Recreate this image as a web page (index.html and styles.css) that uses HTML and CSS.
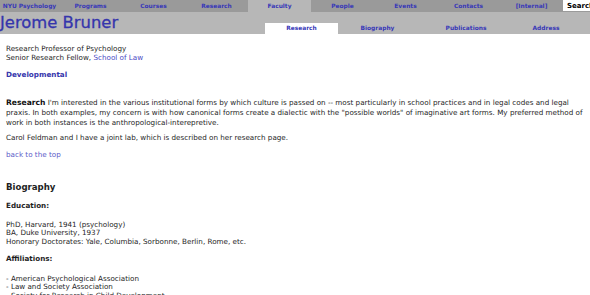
FILE: index.html
```html
<!DOCTYPE html>
<html lang="en">
  <head>
    <meta charset="UTF-8" />
    <title>Jerome Bruner - NYU Psychology</title>
    <link rel="stylesheet" href="styles.css">
  </head>
  <body>
    <!-- Main navigation -->
    <div class="topnav">
      <a class="nav-item first" href="#">NYU Psychology</a>
      <a class="nav-item" href="#">Programs</a>
      <a class="nav-item" href="#">Courses</a>
      <a class="nav-item" href="#">Research</a>
      <a class="nav-item active" href="#">Faculty</a>
      <a class="nav-item" href="#">People</a>
      <a class="nav-item" href="#">Events</a>
      <a class="nav-item" href="#">Contacts</a>
      <a class="nav-item" href="#">[Internal]</a>
      <input class="search" type="text" value="Search" />
    </div>

    <!-- Name band with section tabs -->
    <div class="band">
      <h1 class="name">Jerome Bruner</h1>
      <div class="subnav">
        <a class="sub-item active" href="#">Research</a>
        <a class="sub-item w-bio" href="#">Biography</a>
        <a class="sub-item w-pub" href="#">Publications</a>
        <a class="sub-item w-addr" href="#">Address</a>
      </div>
    </div>

    <div class="content">
      <p class="titles">
        Research Professor of Psychology<br />
        Senior Research Fellow, <a class="link" href="#">School of Law</a>
      </p>

      <p class="area"><a href="#">Developmental</a></p>

      <p class="research">
        <span class="inline-head">Research</span>
        I'm interested in the various institutional forms by which culture is passed on -- most particularly in school practices and in legal codes and legal praxis. In both examples, my concern is with how canonical forms create a dialectic with the "possible worlds" of imaginative art forms. My preferred method of work in both instances is the anthropological-interepretive.
      </p>

      <p class="lab">Carol Feldman and I have a joint lab, which is described on her research page.</p>

      <p class="top-link"><a href="#">back to the top</a></p>

      <h2 class="section-head">Biography</h2>

      <h3 class="sub-head">Education:</h3>
      <p class="list">
        PhD, Harvard, 1941 (psychology)<br />
        BA, Duke University, 1937<br />
        Honorary Doctorates: Yale, Columbia, Sorbonne, Berlin, Rome, etc.
      </p>

      <h3 class="sub-head next">Affiliations:</h3>
      <p class="list">
        - American Psychological Association<br />
        - Law and Society Association<br />
        - Society for Research in Child Development
      </p>
    </div>
  </body>
</html>
```

FILE: styles.css
```css
body {
  margin: 0;
  background: #fff;
  color: #1e1e1e;
  font-family: "DejaVu Sans", Verdana, sans-serif;
  font-size: 7.2px;
  line-height: 8.5px;
}

a {
  text-decoration: none;
}

/* top navigation */
.topnav {
  display: flex;
  height: 12px;
  background: #9a9a9a;
}

.nav-item {
  flex: 0 0 63px;
  text-align: center;
  font-weight: bold;
  font-size: 5.9px;
  line-height: 12px;
  color: #3838b8;
}

.nav-item.first {
  flex-basis: 59px;
}

.nav-item.active {
  background: #b7b7b7;
}

.search {
  flex: 1;
  min-width: 0;
  height: 11px;
  margin: 0;
  padding: 0 0 0 4px;
  border: none;
  background: #fff;
  font-family: "DejaVu Sans", Verdana, sans-serif;
  font-size: 7px;
  font-weight: bold;
  color: #000;
}

/* name band */
.band {
  display: flex;
  align-items: flex-end;
  height: 22px;
  background: #b7b7b7;
}

.name {
  flex: 0 0 265px;
  align-self: flex-start;
  margin: 0;
  font-size: 16.4px;
  font-weight: normal;
  line-height: 22px;
  color: #3535ac;
  -webkit-text-stroke: 0.3px #3535ac;
}

.subnav {
  display: flex;
  flex: 1;
}

.sub-item {
  flex: 0 0 73px;
  text-align: center;
  font-weight: bold;
  font-size: 5.9px;
  line-height: 11px;
  color: #3838b8;
}

.sub-item.active {
  background: #fff;
}

.sub-item.w-bio {
  flex-basis: 79px;
}

.sub-item.w-pub {
  flex-basis: 98px;
}

.sub-item.w-addr {
  flex-basis: 62px;
}

/* page content */
.content {
  padding: 0 0 0 6px;
}

.content p {
  margin: 0;
}

.titles {
  padding-top: 11px;
}

.link {
  color: #4a4ac4;
}

.area {
  margin-top: 8.5px !important;
  font-weight: bold;
}

.area a {
  color: #3535ac;
}

.research {
  margin-top: 19px !important;
  line-height: 10px;
}

.inline-head {
  font-weight: bold;
  font-size: 7.6px;
  color: #111;
}

.lab {
  margin-top: 6px !important;
}

.top-link {
  margin-top: 8px !important;
}

.top-link a {
  color: #5a5ac8;
}

.section-head {
  margin: 23px 0 0;
  font-size: 8.6px;
  line-height: 10px;
}

.sub-head {
  margin: 10px 0 0;
  font-size: 7.2px;
  line-height: 8.5px;
}

.sub-head.next {
  margin-top: 9px;
}

.list {
  margin-top: 10px !important;
}

.sub-head.next + .list {
  margin-top: 11px !important;
}
```
